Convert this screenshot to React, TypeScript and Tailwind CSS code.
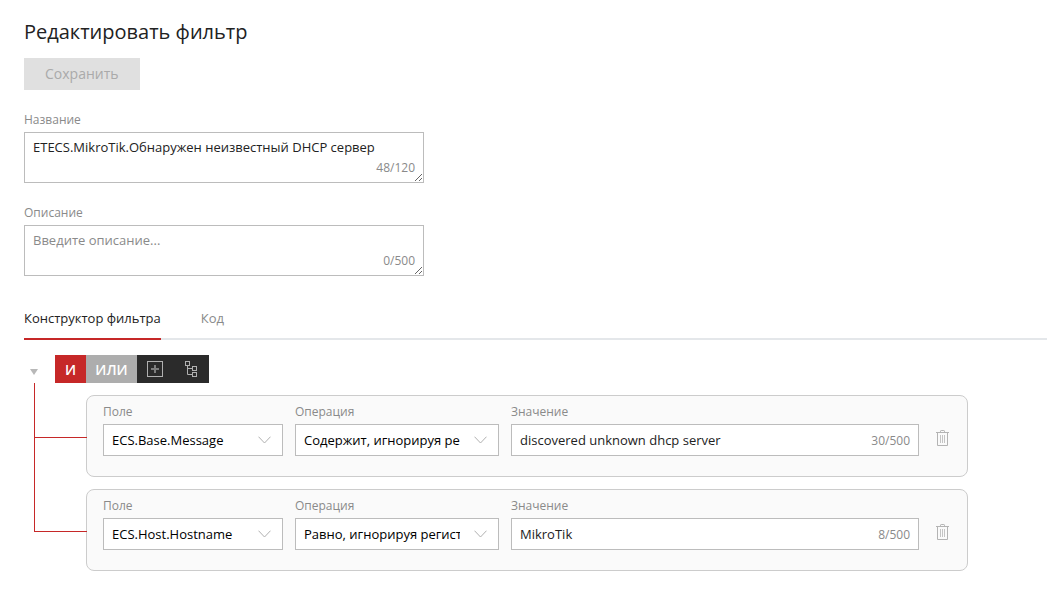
import { useState } from "react";

type Condition = {
  id: number;
  field: string;
  operation: string;
  value: string;
};

const FIELDS = ["ECS.Base.Message", "ECS.Host.Hostname"];
const OPERATIONS = ["Содержит, игнорируя регистр", "Равно, игнорируя регистр"];

const initialConditions: Condition[] = [
  {
    id: 1,
    field: "ECS.Base.Message",
    operation: "Содержит, игнорируя регистр",
    value: "discovered unknown dhcp server",
  },
  {
    id: 2,
    field: "ECS.Host.Hostname",
    operation: "Равно, игнорируя регистр",
    value: "MikroTik",
  },
];

function ChevronIcon() {
  return (
    <svg width="13" height="8" viewBox="0 0 13 8" fill="none" stroke="#b0b0b0" aria-hidden="true">
      <path d="M0.5 0.7 L6.5 7 L12.5 0.7" />
    </svg>
  );
}

function TrashIcon() {
  return (
    <svg width="13" height="16" viewBox="0 0 13 16" fill="none" stroke="#b3b3b3" aria-hidden="true">
      <path d="M0 2.5 H13" />
      <path d="M4.5 2.5 V1.2 Q4.5 0.5 5.2 0.5 H7.8 Q8.5 0.5 8.5 1.2 V2.5" />
      <path d="M1.5 2.5 V15.5 H11.5 V2.5" />
      <path d="M4.5 5 V13 M6.5 5 V13 M8.5 5 V13" stroke="#c4c4c4" />
    </svg>
  );
}

function AddIcon() {
  return (
    <svg width="16" height="16" viewBox="0 0 16 16" fill="none" stroke="#b0b0b0" aria-hidden="true">
      <rect x="0.5" y="0.5" width="15" height="15" />
      <path d="M4 8 H12 M8 4 V12" stroke="#7d7d7d" strokeWidth="2" />
    </svg>
  );
}

function TreeIcon() {
  return (
    <svg width="12" height="16" viewBox="0 0 12 16" fill="none" stroke="#b0b0b0" aria-hidden="true">
      <rect x="0.5" y="0.5" width="4" height="4" />
      <rect x="7.5" y="5.5" width="4" height="4" />
      <rect x="7.5" y="11.5" width="4" height="4" />
      <path d="M2.5 4.5 V13.5 H7.5 M2.5 7.5 H7.5" />
    </svg>
  );
}

type TextFieldProps = {
  id: string;
  label: string;
  value: string;
  max: number;
  placeholder?: string;
  onChange: (value: string) => void;
};

function TextAreaField({ id, label, value, max, placeholder, onChange }: TextFieldProps) {
  return (
    <div className="flex w-full max-w-[400px] flex-col gap-1">
      <label htmlFor={id} className="text-[12px] leading-4 text-[#8a8a8a]">
        {label}
      </label>
      <div className="relative flex">
        <textarea
          id={id}
          value={value}
          maxLength={max}
          placeholder={placeholder}
          onChange={(e) => onChange(e.target.value)}
          className="h-[51px] w-full resize-y overflow-hidden border border-[#bcbcbc] bg-white px-2 py-1 text-[13px] leading-5 text-[#222222] outline-none placeholder:text-[#8a8a8a]"
        />
        <span className="pointer-events-none absolute right-[9px] bottom-[5px] text-[12px] leading-5 text-[#8a8a8a]">
          {value.length}/{max}
        </span>
      </div>
    </div>
  );
}

type SelectFieldProps = {
  id: string;
  label: string;
  value: string;
  options: string[];
  onChange: (value: string) => void;
};

function SelectField({ id, label, value, options, onChange }: SelectFieldProps) {
  return (
    <div className="flex flex-col gap-1">
      <label htmlFor={id} className="text-[12px] leading-4 text-[#8a8a8a]">
        {label}
      </label>
      <div className="relative">
        <select
          id={id}
          value={value}
          onChange={(e) => onChange(e.target.value)}
          className="h-8 w-full appearance-none border border-[#bcbcbc] bg-white pt-px pr-[38px] pl-2 text-[13px] text-black outline-none"
        >
          {options.map((option) => (
            <option key={option}>{option}</option>
          ))}
        </select>
        <span className="pointer-events-none absolute inset-y-0 right-3 flex items-center">
          <ChevronIcon />
        </span>
      </div>
    </div>
  );
}

type ConditionRowProps = {
  condition: Condition;
  last: boolean;
  onChange: (patch: Partial<Condition>) => void;
  onRemove: () => void;
};

function ConditionRow({ condition, last, onChange, onRemove }: ConditionRowProps) {
  const { id, field, operation, value } = condition;

  return (
    <li className="flex">
      {/* branch line from the group down to this card */}
      <div className="z-10 -mr-px flex w-[53px] shrink-0 flex-col">
        <div className="h-[55px] border-b border-l border-[#c62828]" />
        {!last && <div className="flex-1 border-l border-[#c62828]" />}
      </div>

      <div className="mt-3 grid min-w-0 flex-1 grid-cols-[180px_204px_1fr_auto] gap-x-3 rounded-lg border border-[#cccccc] bg-[#fafafa] px-4 pt-2 pb-5">
        <SelectField
          id={`field-${id}`}
          label="Поле"
          value={field}
          options={FIELDS}
          onChange={(next) => onChange({ field: next })}
        />
        <SelectField
          id={`operation-${id}`}
          label="Операция"
          value={operation}
          options={OPERATIONS}
          onChange={(next) => onChange({ operation: next })}
        />
        <div className="flex min-w-0 flex-col gap-1">
          <label htmlFor={`value-${id}`} className="text-[12px] leading-4 text-[#8a8a8a]">
            Значение
          </label>
          <div className="flex h-8 items-center gap-2 border border-[#bcbcbc] bg-white px-2 pt-px">
            <input
              id={`value-${id}`}
              type="text"
              value={value}
              maxLength={500}
              onChange={(e) => onChange({ value: e.target.value })}
              className="min-w-0 flex-1 text-[13px] text-[#222222] outline-none"
            />
            <span className="text-[12px] text-[#8a8a8a]">{value.length}/500</span>
          </div>
        </div>
        <button
          type="button"
          onClick={onRemove}
          aria-label="Удалить условие"
          className="mb-1 flex h-7 items-center self-end pr-0.5 pl-[5px]"
        >
          <TrashIcon />
        </button>
      </div>
    </li>
  );
}

export default function App() {
  const [name, setName] = useState("ETECS.MikroTik.Обнаружен неизвестный DHCP сервер");
  const [description, setDescription] = useState("");
  const [tab, setTab] = useState("builder");
  const [operator, setOperator] = useState("and");
  const [open, setOpen] = useState(true);
  const [conditions, setConditions] = useState(initialConditions);

  const updateCondition = (id: number, patch: Partial<Condition>) => {
    setConditions((prev) => prev.map((c) => (c.id === id ? { ...c, ...patch } : c)));
  };

  const removeCondition = (id: number) => {
    setConditions((prev) => prev.filter((c) => c.id !== id));
  };

  const addCondition = () => {
    setConditions((prev) => [
      ...prev,
      { id: Date.now(), field: FIELDS[0], operation: OPERATIONS[0], value: "" },
    ]);
  };

  return (
    <main className="min-h-screen bg-white pt-4 pb-10 pl-6 font-['Open_Sans','Noto_Sans',sans-serif] text-[#222222]">
      <h1 className="text-[20px] leading-8">Редактировать фильтр</h1>
      <button
        type="button"
        disabled
        className="mt-2.5 h-8 bg-[#e0e0e0] px-[21px] pb-0.5 text-[14px] text-[#aaaaaa]"
      >
        Сохранить
      </button>

      <form className="mt-[22px] flex flex-col gap-[22px] pr-6">
        <TextAreaField id="name" label="Название" value={name} max={120} onChange={setName} />
        <TextAreaField
          id="description"
          label="Описание"
          value={description}
          max={500}
          placeholder="Введите описание..."
          onChange={setDescription}
        />
      </form>

      <div role="tablist" className="mt-[30px] flex gap-10 border-b-2 border-[#e4e7ea] text-[13px] leading-5">
        <button
          type="button"
          role="tab"
          aria-selected={tab === "builder"}
          onClick={() => setTab("builder")}
          className={
            tab === "builder"
              ? "-mb-0.5 border-b-2 border-[#c62828] pt-0.5 pb-2.5"
              : "-mb-0.5 border-b-2 border-transparent pt-0.5 pb-2.5 text-[#8a8a8a]"
          }
        >
          Конструктор фильтра
        </button>
        <button
          type="button"
          role="tab"
          aria-selected={tab === "code"}
          onClick={() => setTab("code")}
          className={
            tab === "code"
              ? "-mb-0.5 border-b-2 border-[#c62828] pt-0.5 pb-2.5"
              : "-mb-0.5 border-b-2 border-transparent pt-0.5 pb-2.5 text-[#8a8a8a]"
          }
        >
          Код
        </button>
      </div>

      <section className="mt-[15px] pr-[79px]">
        <div className="flex h-7">
          <button
            type="button"
            onClick={() => setOpen(!open)}
            aria-expanded={open}
            aria-label="Свернуть группу"
            className="flex w-[31px] items-end pb-2 pl-1.5"
          >
            <svg width="8" height="6" viewBox="0 0 8 6" fill="#b8b8b8" aria-hidden="true">
              <path d="M0 0 H8 L4 6 Z" />
            </svg>
          </button>
          <button
            type="button"
            onClick={() => setOperator("and")}
            className={
              operator === "and"
                ? "w-[31px] bg-[#c62828] text-[14px] font-semibold text-white"
                : "w-[31px] bg-[#adadad] text-[14px] font-semibold text-white"
            }
          >
            И
          </button>
          <button
            type="button"
            onClick={() => setOperator("or")}
            className={
              operator === "or"
                ? "w-[51px] bg-[#c62828] text-[14px] font-semibold text-white"
                : "w-[51px] bg-[#adadad] text-[14px] font-semibold text-white"
            }
          >
            ИЛИ
          </button>
          <button
            type="button"
            onClick={addCondition}
            aria-label="Добавить условие"
            className="flex w-9 items-center justify-center bg-[#2b2b2b]"
          >
            <AddIcon />
          </button>
          <button
            type="button"
            aria-label="Добавить группу"
            className="flex w-9 items-center justify-center bg-[#2b2b2b]"
          >
            <TreeIcon />
          </button>
        </div>

        {open && (
          <ul className="pl-2.5">
            {conditions.map((condition, index) => (
              <ConditionRow
                key={condition.id}
                condition={condition}
                last={index === conditions.length - 1}
                onChange={(patch) => updateCondition(condition.id, patch)}
                onRemove={() => removeCondition(condition.id)}
              />
            ))}
          </ul>
        )}
      </section>
    </main>
  );
}
